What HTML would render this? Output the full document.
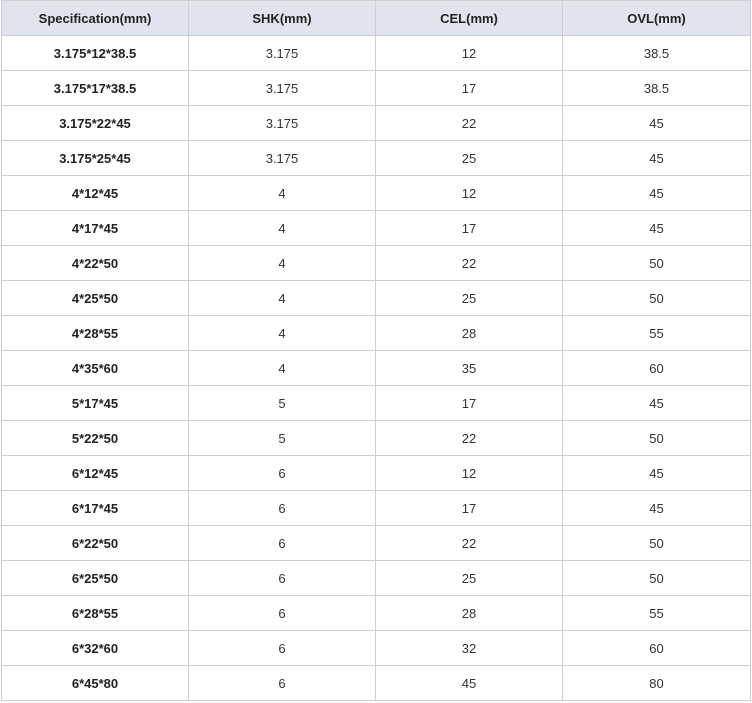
<!DOCTYPE html>
<html><head><meta charset="utf-8"><style>
body{margin:0;background:#fff;}
table{border-collapse:collapse;position:absolute;left:1px;top:0px;width:749px;table-layout:fixed;font-family:"Liberation Sans",sans-serif;font-size:13px;color:#333;}
td,th{border:1px solid #cfcfcf;height:34px;padding:0;text-align:center;}
th{background:#dfe4ee;font-weight:bold;color:#222;height:34px;}
td:first-child{font-weight:bold;color:#222;}
</style></head><body>
<table>
<colgroup><col style="width:187px"><col style="width:187px"><col style="width:187px"><col style="width:188px"></colgroup>
<tr><th>Specification(mm)</th><th>SHK(mm)</th><th>CEL(mm)</th><th>OVL(mm)</th></tr>
<tr><td>3.175*12*38.5</td><td>3.175</td><td>12</td><td>38.5</td></tr>
<tr><td>3.175*17*38.5</td><td>3.175</td><td>17</td><td>38.5</td></tr>
<tr><td>3.175*22*45</td><td>3.175</td><td>22</td><td>45</td></tr>
<tr><td>3.175*25*45</td><td>3.175</td><td>25</td><td>45</td></tr>
<tr><td>4*12*45</td><td>4</td><td>12</td><td>45</td></tr>
<tr><td>4*17*45</td><td>4</td><td>17</td><td>45</td></tr>
<tr><td>4*22*50</td><td>4</td><td>22</td><td>50</td></tr>
<tr><td>4*25*50</td><td>4</td><td>25</td><td>50</td></tr>
<tr><td>4*28*55</td><td>4</td><td>28</td><td>55</td></tr>
<tr><td>4*35*60</td><td>4</td><td>35</td><td>60</td></tr>
<tr><td>5*17*45</td><td>5</td><td>17</td><td>45</td></tr>
<tr><td>5*22*50</td><td>5</td><td>22</td><td>50</td></tr>
<tr><td>6*12*45</td><td>6</td><td>12</td><td>45</td></tr>
<tr><td>6*17*45</td><td>6</td><td>17</td><td>45</td></tr>
<tr><td>6*22*50</td><td>6</td><td>22</td><td>50</td></tr>
<tr><td>6*25*50</td><td>6</td><td>25</td><td>50</td></tr>
<tr><td>6*28*55</td><td>6</td><td>28</td><td>55</td></tr>
<tr><td>6*32*60</td><td>6</td><td>32</td><td>60</td></tr>
<tr><td>6*45*80</td><td>6</td><td>45</td><td>80</td></tr>
</table>
</body></html>
